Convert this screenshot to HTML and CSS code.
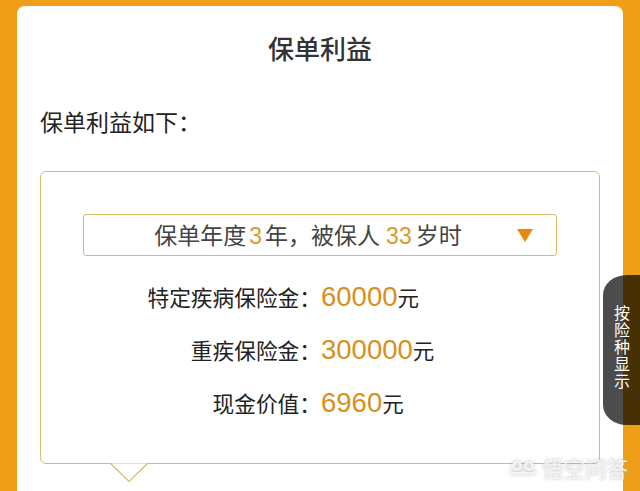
FILE: index.html
```html
<!DOCTYPE html>
<html lang="zh">
<head>
<meta charset="utf-8">
<title>保单利益</title>
<link rel="stylesheet" href="styles.css">
</head>
<body>
<main class="card">
  <h1 class="title">保单利益</h1>
  <p class="intro">保单利益如下：</p>
  <section class="box">
    <div class="select">
      <span class="select-text">保单年度<b class="num">3</b>年，被保人<b class="num num-gap">33</b>岁时</span>
      <svg class="caret" width="16" height="13" viewBox="0 0 16 13"><path d="M0 0H16L8 13Z" fill="#e8890c"/></svg>
    </div>
    <div class="rows">
      <div class="row"><span class="label">特定疾病保险金：</span><span class="value">60000</span><span class="unit">元</span></div>
      <div class="row"><span class="label">重疾保险金：</span><span class="value">300000</span><span class="unit">元</span></div>
      <div class="row"><span class="label">现金价值：</span><span class="value">6960</span><span class="unit">元</span></div>
    </div>
    <svg class="pointer" width="38" height="20" viewBox="0 0 38 20"><path d="M0.5 0.5L19 18.5L37.5 0.5" fill="#fff" stroke="#d9b872" stroke-width="1.2"/></svg>
  </section>
</main>
<aside class="side">按险种显示</aside>
<div class="mark">
  <svg class="mark-logo" width="30" height="14" viewBox="0 0 30 14"><g fill="none" stroke="#f4f4f4" stroke-width="2.4"><circle cx="9" cy="5" r="3.6"/><circle cx="21" cy="5" r="3.6"/><path d="M2 11q6.500 3 13 0q6.500 3 13 0"/></g></svg>
  <span>悟空问答</span>
</div>
</body>
</html>
```
FILE: styles.css
```css
* { box-sizing: border-box; }
html, body { margin: 0; height: 491px; overflow: hidden; }
body {
  background: #ee9e17;
  padding: 6px 17px 0;
  font-family: "Noto Sans CJK SC", "Liberation Sans", sans-serif;
  color: #333;
}
.card {
  background: #fff;
  border-radius: 8px 8px 0 0;
  height: 485px;
  padding: 25px 23px 0;
}
.title {
  margin: 0;
  text-align: center;
  font-size: 26px;
  line-height: 34px;
  font-weight: 500;
  color: #333;
}
.intro {
  margin: 39px 0 0;
  font-size: 23px;
  line-height: 34px;
  color: #222;
}
.box {
  position: relative;
  margin-top: 33px;
  width: 560px;
  height: 293px;
  border: 1px solid #d9b872;
  border-radius: 6px;
  padding: 42px 42px 0;
}
.select {
  position: relative;
  height: 42px;
  border: 1px solid #dcb868;
  border-radius: 3px;
  display: flex;
  align-items: center;
  justify-content: center;
  padding-right: 24px;
}
.select-text { font-size: 23px; line-height: 30px; color: #444; }
.num {
  font-family: "Liberation Sans", sans-serif;
  font-weight: 400;
  color: #d99a2b;
  margin: 0 3px;
}
.num-gap { margin: 0 4px 0 6px; }
.caret { position: absolute; right: 23px; top: 14px; }
.rows { margin-top: 26px; display: flex; flex-direction: column; gap: 23px; }
.row { display: flex; align-items: baseline; height: 30px; line-height: 30px; }
.label { width: 238px; text-align: right; font-size: 21.7px; color: #222; }
.value {
  font-family: "Liberation Sans", sans-serif;
  font-size: 27.500px;
  color: #d8901a;
}
.unit { font-size: 21.5px; color: #222; }
.pointer { position: absolute; left: 69px; bottom: -20px; }
.side {
  position: absolute;
  left: 603px;
  top: 275px;
  width: 37px;
  height: 150px;
  border-radius: 24px 0 0 24px / 20px 0 0 20px;
  background: rgba(0, 0, 0, 0.7);
  color: #fff;
  font-size: 16px;
  line-height: 17px;
  letter-spacing: 1px;
  writing-mode: vertical-rl;
  display: flex;
  align-items: center;
  justify-content: center;
  padding-bottom: 6px;
}
.mark {
  position: absolute;
  right: 12px;
  bottom: 11px;
  display: flex;
  align-items: center;
  gap: 4px;
  color: #f4f4f4;
  font-size: 21.5px;
  line-height: 24px;
  text-shadow: 0 0 3px rgba(170, 170, 170, 0.8);
}
.mark-logo { filter: drop-shadow(0 0 2px rgba(170, 170, 170, 0.8)); }
```
